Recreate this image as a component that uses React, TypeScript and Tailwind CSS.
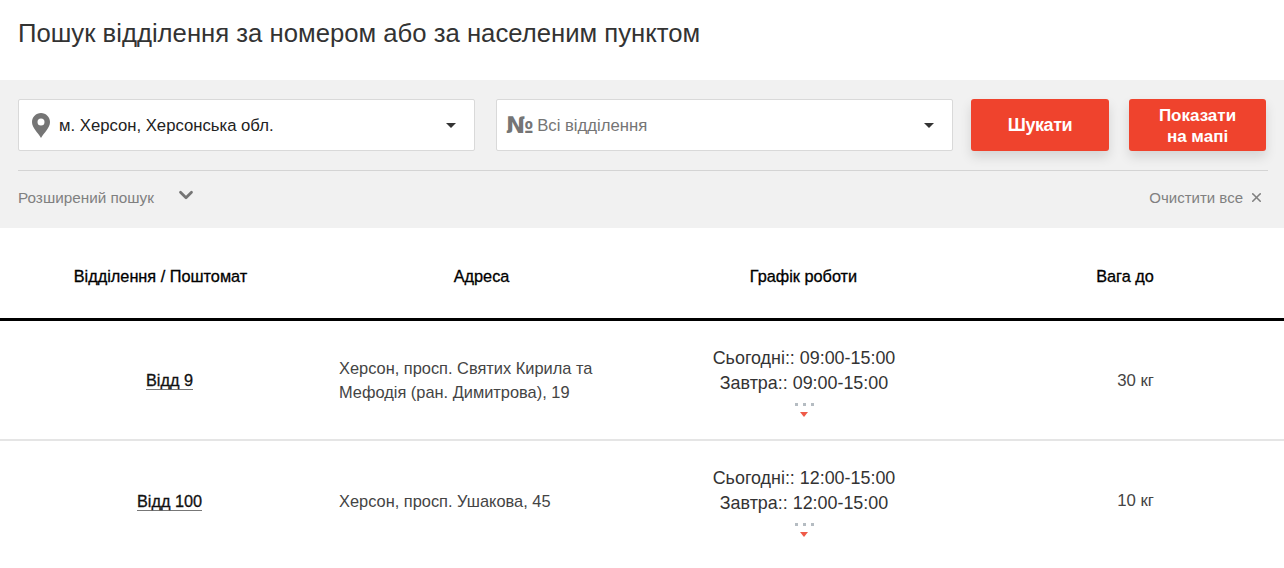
import { ChevronDown, X } from "lucide-react";

const rows = [
  {
    name: "Відд 9",
    address: ["Херсон, просп. Святих Кирила та", "Мефодія (ран. Димитрова), 19"],
    today: "09:00-15:00",
    tomorrow: "09:00-15:00",
    weight: "30 кг",
  },
  {
    name: "Відд 100",
    address: ["Херсон, просп. Ушакова, 45"],
    today: "12:00-15:00",
    tomorrow: "12:00-15:00",
    weight: "10 кг",
  },
];

function Caret() {
  return <span className="w-0 h-0 border-x-[5px] border-x-transparent border-t-[5px] border-t-[#333]" />;
}

function Pin() {
  return (
    <svg width="18" height="25" viewBox="0 0 18 25" className="shrink-0">
      <path
        fill="#757575"
        fillRule="evenodd"
        d="M9 0C4 0 0 4 0 9c0 3.2 1.5 5.6 3.4 8.300C5.200 19.800 7.500 22.500 9 25c1.500-2.500 3.800-5.200 5.600-7.700C16.500 14.600 18 12.200 18 9c0-5-4-9-9-9zm0 5.500a3.500 3.500 0 1 1 0 7 3.500 3.500 0 0 1 0-7z"
      />
    </svg>
  );
}

export default function App() {
  return (
    <div className="w-[1284px] h-[568px] overflow-hidden bg-white font-['Liberation_Sans',sans-serif] text-black">
      <h1 className="h-20 pl-[18px] pt-[18px] text-[25.7px] leading-[30px] font-normal text-[#333]">
        Пошук відділення за номером або за населеним пунктом
      </h1>

      {/* Search panel */}
      <div className="h-[148px] bg-[#f1f1f1] pl-[18px] pr-4 pt-[19px]">
        <div className="flex items-start h-[52px]">
          <div className="w-[457px] h-[52px] bg-white border border-[#d9d9d9] rounded-[2px] flex items-center pl-[13px] pr-[18px]">
            <Pin />
            <span className="ml-[9px] flex-1 pt-px text-[16.7px] text-[#222]">м. Херсон, Херсонська обл.</span>
            <Caret />
          </div>
          <div className="ml-[21px] w-[457px] h-[52px] bg-white border border-[#d9d9d9] rounded-[2px] flex items-center pl-[9px] pr-[18px]">
            <span className="font-['DejaVu_Sans',sans-serif] text-[23px] leading-none font-bold text-[#757575] tracking-[-1.5px]">№</span>
            <span className="ml-[5px] flex-1 pt-px text-[16.7px] text-[#757575]">Всі відділення</span>
            <Caret />
          </div>
          <button className="ml-[18px] w-[138px] h-[52px] pt-px bg-[#ef432d] rounded-[3px] text-white font-bold text-[18px] tracking-[-0.4px] shadow-[0_6px_12px_rgba(0,0,0,0.12)]">
            Шукати
          </button>
          <button className="ml-5 w-[137px] h-[52px] pt-[2px] bg-[#ef432d] rounded-[3px] text-white font-bold text-[17px] leading-[21px] shadow-[0_6px_12px_rgba(0,0,0,0.12)]">
            Показати
            <br />
            на мапі
          </button>
        </div>
        <div className="mt-[19px] border-t border-[#d4d4d4] flex items-center justify-between h-[54px] text-[#808080]">
          <div className="flex items-center">
            <span className="pt-px text-[15.3px]">Розширений пошук</span>
            <ChevronDown className="ml-[21px] -mt-1.5 w-[22px] h-[22px] text-[#757575]" strokeWidth={3} />
          </div>
          <div className="flex items-center pr-[4px] pt-px text-[15px]">
            <span>Очистити все</span>
            <X className="ml-[6px] -mt-0.5 w-[15px] h-[15px] text-[#808080]" strokeWidth={2.5} />
          </div>
        </div>
      </div>

      {/* Table header */}
      <div className="grid grid-cols-4 h-[93px] pt-1.5 border-b-[3px] border-black items-center text-center text-[16.3px] [-webkit-text-stroke:0.3px_#000]">
        <div>Відділення / Поштомат</div>
        <div>Адреса</div>
        <div className="pl-[2px]">Графік роботи</div>
        <div className="pl-[3px]">Вага до</div>
      </div>

      {/* Rows */}
      {rows.map((row, i) => (
        <div
          key={row.name}
          className={`grid grid-cols-4 h-[120px] items-center ${i === 0 ? "border-b-2 border-[#e5e5e5]" : ""}`}
        >
          <div className="text-center pl-[18px]">
            <a className="text-[16.3px] [-webkit-text-stroke:0.3px_#111] border-b border-[#777] text-[#111]">{row.name}</a>
          </div>
          <div className="pl-[18px] text-[16.4px] leading-[24px] text-[#444]">
            {row.address.map((line) => (
              <div key={line}>{line}</div>
            ))}
          </div>
          <div className={`flex flex-col items-center pl-[3px] text-[17.9px] leading-[25px] text-[#333] ${i === 0 ? "pt-[2px]" : ""}`}>
            <div>Сьогодні:: {row.today}</div>
            <div>Завтра:: {row.tomorrow}</div>
            <div className="flex gap-[5px] mt-[7px]">
              <span className="w-[3px] h-[3px] bg-[#b5bcc2]" />
              <span className="w-[3px] h-[3px] bg-[#b5bcc2]" />
              <span className="w-[3px] h-[3px] bg-[#b5bcc2]" />
            </div>
            <span className="mt-[6px] w-0 h-0 border-x-[4px] border-x-transparent border-t-[5px] border-t-[#ef5a48]" />
          </div>
          <div className={`text-right pr-[130px] text-[16.8px] text-[#444] ${i === 0 ? "pt-[2px]" : ""}`}>{row.weight}</div>
        </div>
      ))}
    </div>
  );
}
